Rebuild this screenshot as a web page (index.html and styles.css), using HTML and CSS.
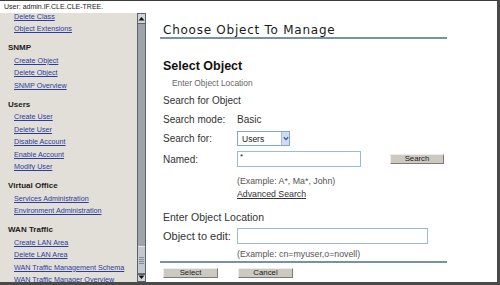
FILE: index.html
```html
<!DOCTYPE html>
<html>
<head>
<meta charset="utf-8">
<link rel="stylesheet" href="styles.css">
</head>
<body>
<div class="window">
  <div class="userbar">User: admin.IF.CLE.CLE-TREE.</div>
  <div class="main">
    <nav class="nav">
      <div class="nav-list">
        <div class="nav-group">
          <a class="nav-link">Delete Class</a>
          <a class="nav-link">Object Extensions</a>
        </div>
        <div class="nav-group">
          <div class="nav-heading">SNMP</div>
          <a class="nav-link">Create Object</a>
          <a class="nav-link">Delete Object</a>
          <a class="nav-link">SNMP Overview</a>
        </div>
        <div class="nav-group">
          <div class="nav-heading">Users</div>
          <a class="nav-link">Create User</a>
          <a class="nav-link">Delete User</a>
          <a class="nav-link">Disable Account</a>
          <a class="nav-link">Enable Account</a>
          <a class="nav-link">Modify User</a>
        </div>
        <div class="nav-group">
          <div class="nav-heading">Virtual Office</div>
          <a class="nav-link">Services Administration</a>
          <a class="nav-link">Environment Administration</a>
        </div>
        <div class="nav-group">
          <div class="nav-heading">WAN Traffic</div>
          <a class="nav-link">Create LAN Area</a>
          <a class="nav-link">Delete LAN Area</a>
          <a class="nav-link">WAN Traffic Management Schema</a>
          <a class="nav-link">WAN Traffic Manager Overview</a>
        </div>
      </div>
    </nav>
    <div class="scrollbar">
      <div class="sb-btn sb-up"><svg width="7" height="5" viewBox="0 0 7 5"><path d="M0.5 4.5 L3.5 1 L6.5 4.5 Z" fill="#111"/></svg></div>
      <div class="sb-track">
        <div class="sb-thumb"><span class="grip"></span><span class="grip"></span><span class="grip"></span><span class="grip"></span></div>
      </div>
      <div class="sb-btn sb-down"><svg width="7" height="5" viewBox="0 0 7 5"><path d="M0.5 0.5 L3.5 4 L6.5 0.5 Z" fill="#111"/></svg></div>
    </div>
    <section class="content">
      <div class="panel">
        <h1 class="title">Choose Object To Manage</h1>
        <h2 class="section-title">Select Object</h2>
        <div class="hint">Enter Object Location</div>
        <div class="subhead">Search for Object</div>
        <div class="row row-mode"><span class="label">Search mode:</span><span>Basic</span></div>
        <div class="row row-for"><span class="label">Search for:</span>
          <span class="select"><span class="select-text">Users</span><span class="select-btn"><svg width="6" height="5" viewBox="0 0 6 5"><path d="M0.8 1.2 L3 3.6 L5.2 1.2" fill="none" stroke="#2f57a8" stroke-width="1.3"/></svg></span></span>
        </div>
        <div class="row row-named"><span class="label">Named:</span>
          <span class="input input-named">*</span>
          <span class="btn btn-search">Search</span>
        </div>
        <div class="example">(Example: A*, Ma*, John)</div>
        <div class="adv"><a class="adv-link">Advanced Search</a></div>
        <div class="subhead-lg">Enter Object Location</div>
        <div class="row row-edit"><span class="label">Object to edit:</span><span class="input input-edit"></span></div>
        <div class="example example2">(Example: cn=myuser,o=novell)</div>
        <div class="separator"></div>
        <div class="actions"><span class="btn">Select</span><span class="btn">Cancel</span></div>
      </div>
    </section>
  </div>
</div>
</body>
</html>
```
FILE: styles.css
```css
* { box-sizing: border-box; }
html, body { margin: 0; padding: 0; }
body {
  width: 500px;
  height: 285px;
  overflow: hidden;
  background: #fff;
  font-family: "Liberation Sans", Arial, sans-serif;
}
.window {
  width: 500px;
  height: 285px;
  border-top: 1px solid #3c3c3c;
  border-right: 3px solid #4a4a4a;
  border-bottom: 3px solid #4a4a4a;
  display: flex;
  flex-direction: column;
}
.userbar {
  height: 12px;
  line-height: 12px;
  font-size: 7px;
  padding-left: 4px;
  color: #222;
  background: #fff;
  flex: none;
}
.main {
  flex: 1;
  display: flex;
  min-height: 0;
}
.nav {
  width: 137px;
  flex: none;
  background: #e2dfd8;
  overflow: hidden;
  padding-left: 8px;
}
.nav-list { margin-top: -2.25px; }
.nav-group + .nav-group { margin-top: 6.5px; }
.nav-heading {
  font-size: 8px;
  font-weight: bold;
  line-height: 12.5px;
  color: #222;
}
.nav-link {
  display: block;
  margin-left: 6px;
  font-size: 7.2px;
  line-height: 12.5px;
  color: #2a3d9e;
  text-decoration: underline;
  white-space: nowrap;
}
.scrollbar {
  width: 9px;
  flex: none;
  display: flex;
  flex-direction: column;
  background: #9ea3ac;
  border: 1px solid #5e626a;
}
.sb-btn {
  flex: none;
  display: flex;
  align-items: center;
  justify-content: center;
  background: #d0d3d8;
}
.sb-up { height: 10px; border-bottom: 1px solid #5e626a; }
.sb-down { height: 7px; border-top: 1px solid #5e626a; align-items: flex-start; }
.sb-track {
  flex: 1;
  display: flex;
  flex-direction: column;
  justify-content: flex-end;
}
.sb-thumb {
  height: 28px;
  background: #c3c8d0;
  border-top: 1px solid #e4e7ec;
  border-bottom: 1px solid #6a6e76;
  display: flex;
  flex-direction: column;
  justify-content: center;
  align-items: center;
  gap: 1px;
}
.grip { width: 5px; height: 1px; background: #858b95; }
.content {
  flex: 1;
  padding-left: 14px;
  color: #333;
}
.panel { width: 287px; }
.title {
  margin: 10px 0 0;
  line-height: 14px;
  font-family: "DejaVu Sans", Verdana, sans-serif;
  font-weight: normal;
  font-size: 12px;
  letter-spacing: 0.75px;
  color: #1a1a1a;
  padding-left: 3px;
  border-bottom: 2px solid #7891a6;
}
.section-title {
  margin: 19px 0 0;
  line-height: 16px;
  font-size: 12.5px;
  font-weight: bold;
  padding-left: 3px;
  color: #111;
}
.hint {
  margin-top: 4px;
  line-height: 11px;
  font-size: 8.4px;
  color: #666;
  padding-left: 12px;
}
.subhead {
  margin-top: 6px;
  line-height: 12px;
  font-size: 10px;
  color: #333;
  padding-left: 3px;
}
.row {
  display: flex;
  align-items: center;
  padding-left: 3px;
  font-size: 10px;
  color: #333;
}
.row-mode { margin-top: 2.5px; height: 19px; }
.row-for { height: 20px; }
.row-named { height: 21px; }
.label { width: 74px; flex: none; }
.select {
  width: 53px;
  height: 15px;
  border: 1px solid #86a6c6;
  display: flex;
  align-items: center;
  padding-left: 4px;
  font-size: 8.5px;
  color: #222;
}
.select-text { flex: 1; }
.select-btn {
  width: 8px;
  height: 13px;
  background: #cddcf0;
  border-left: 1px solid #a7bfdc;
  display: flex;
  align-items: center;
  justify-content: center;
}
.input {
  height: 16px;
  border: 1px solid #9db9d6;
  font-size: 8px;
  line-height: 10px;
  padding-left: 2px;
  color: #222;
}
.input-named { width: 124px; }
.input-edit { width: 191px; }
.btn {
  width: 55px;
  height: 10px;
  line-height: 8px;
  text-align: center;
  font-size: 7.8px;
  background: #ccc9c3;
  border: 1px solid;
  border-color: #efece6 #7e7a74 #7e7a74 #efece6;
  color: #1a1a1a;
}
.btn-search { margin-left: 29px; width: 54px; }
.example {
  margin-top: 5px;
  height: 12px;
  line-height: 12px;
  padding-left: 77px;
  font-size: 8.8px;
  color: #555;
}
.adv {
  margin-top: 1.5px;
  height: 12px;
  line-height: 12px;
  padding-left: 77px;
  font-size: 8.75px;
}
.adv-link { color: #333; text-decoration: underline; }
.subhead-lg {
  margin-top: 10.5px;
  line-height: 13px;
  font-size: 10.5px;
  color: #333;
  padding-left: 3px;
}
.row-edit { margin-top: 2.5px; height: 20px; font-size: 11px; }
.example2 { margin-top: 2px; }
.separator { margin-top: 1px; border-top: 2px solid #7891a6; }
.actions {
  margin-top: 5px;
  display: flex;
  gap: 20px;
  padding-left: 3px;
}
```
